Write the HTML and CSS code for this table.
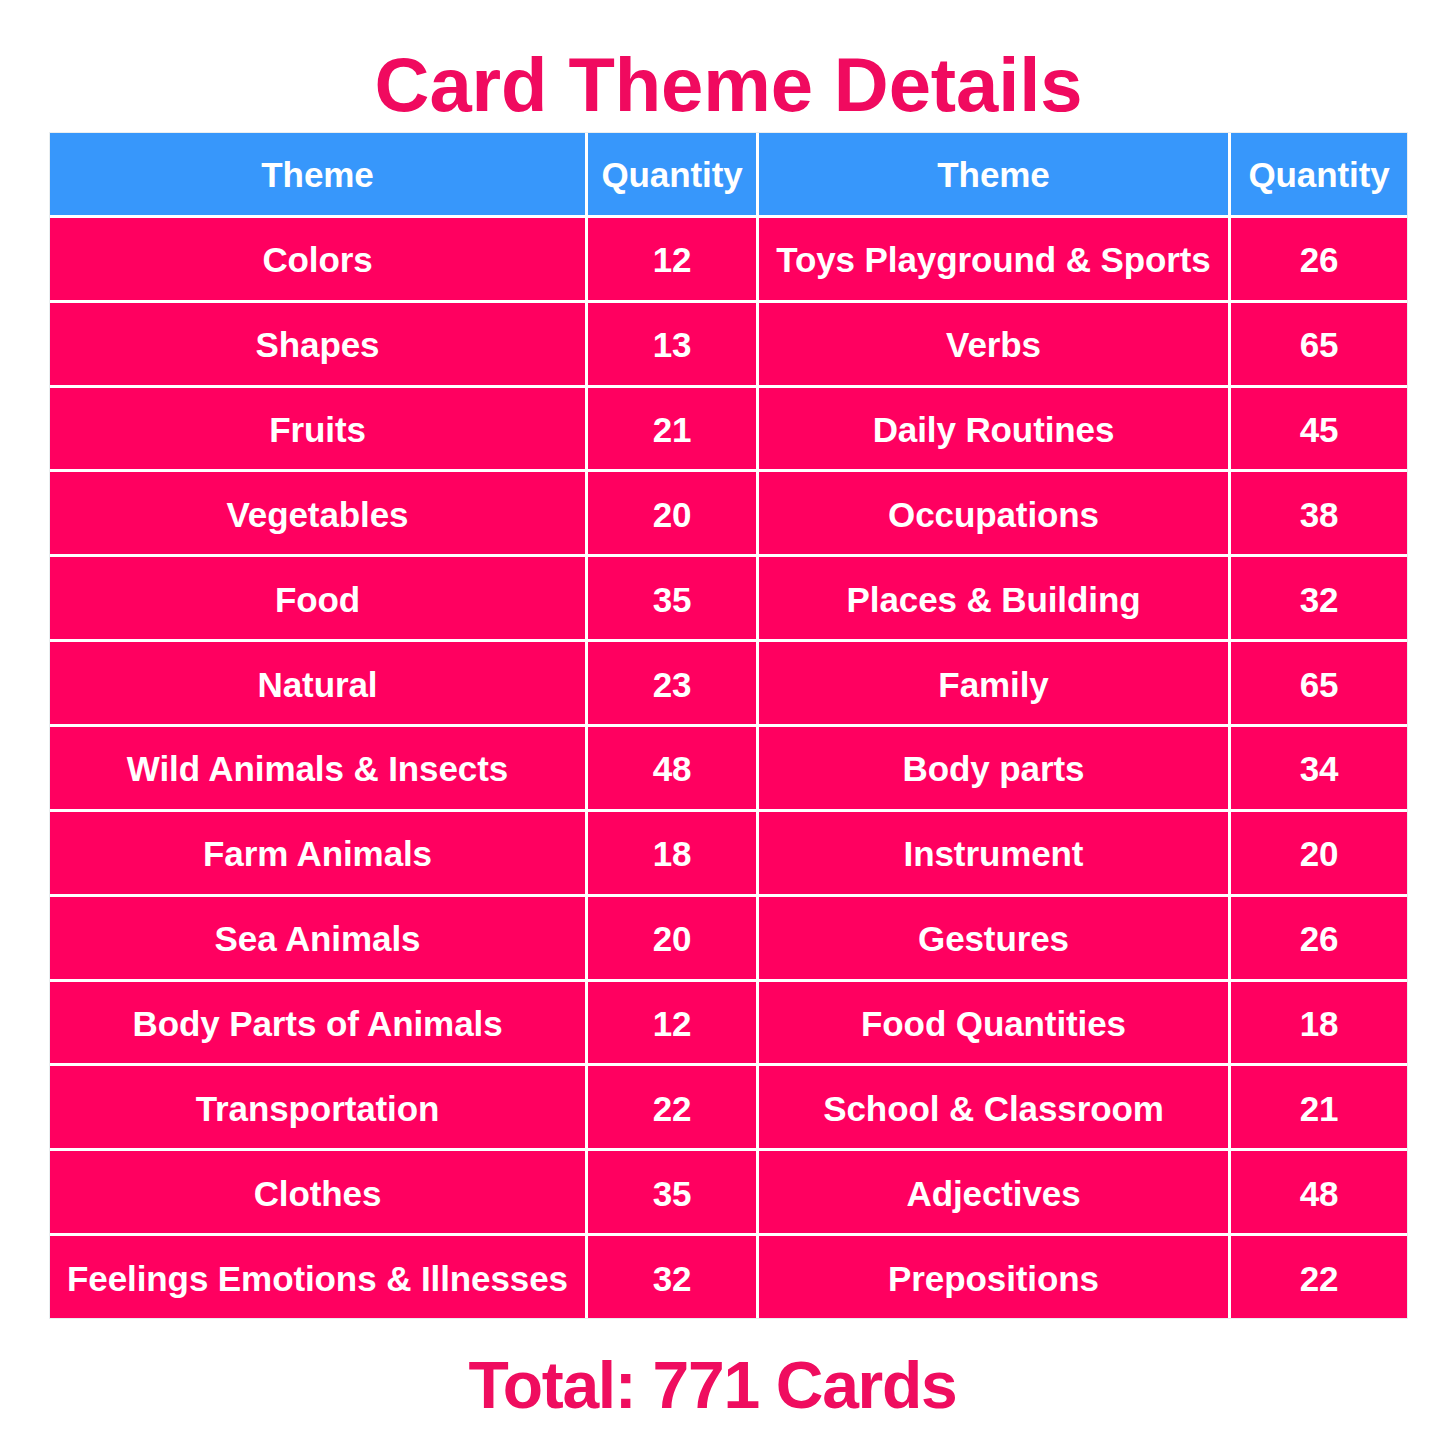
FILE: index.html
```html
<!DOCTYPE html>
<html lang="en">
<head>
<meta charset="utf-8">
<title>Card Theme Details</title>
<link rel="stylesheet" href="styles.css">
</head>
<body>
<div class="page">
  <h1 class="title">Card Theme Details</h1>
  <div class="grid">
    <div class="cell head">Theme</div><div class="cell head">Quantity</div><div class="cell head">Theme</div><div class="cell head">Quantity</div>
    <div class="cell">Colors</div><div class="cell">12</div><div class="cell">Toys Playground &amp; Sports</div><div class="cell">26</div>
    <div class="cell">Shapes</div><div class="cell">13</div><div class="cell">Verbs</div><div class="cell">65</div>
    <div class="cell">Fruits</div><div class="cell">21</div><div class="cell">Daily Routines</div><div class="cell">45</div>
    <div class="cell">Vegetables</div><div class="cell">20</div><div class="cell">Occupations</div><div class="cell">38</div>
    <div class="cell">Food</div><div class="cell">35</div><div class="cell">Places &amp; Building</div><div class="cell">32</div>
    <div class="cell">Natural</div><div class="cell">23</div><div class="cell">Family</div><div class="cell">65</div>
    <div class="cell">Wild Animals &amp; Insects</div><div class="cell">48</div><div class="cell">Body parts</div><div class="cell">34</div>
    <div class="cell">Farm Animals</div><div class="cell">18</div><div class="cell">Instrument</div><div class="cell">20</div>
    <div class="cell">Sea Animals</div><div class="cell">20</div><div class="cell">Gestures</div><div class="cell">26</div>
    <div class="cell">Body Parts of Animals</div><div class="cell">12</div><div class="cell">Food Quantities</div><div class="cell">18</div>
    <div class="cell">Transportation</div><div class="cell">22</div><div class="cell">School &amp; Classroom</div><div class="cell">21</div>
    <div class="cell">Clothes</div><div class="cell">35</div><div class="cell">Adjectives</div><div class="cell">48</div>
    <div class="cell">Feelings Emotions &amp; Illnesses</div><div class="cell">32</div><div class="cell">Prepositions</div><div class="cell">22</div>
  </div>
  <p class="total">Total: 771 Cards</p>
</div>
</body>
</html>
```

FILE: styles.css
```css
html, body {
  margin: 0;
  padding: 0;
  background: #ffffff;
}

body {
  font-family: "Liberation Sans", Arial, sans-serif;
  font-weight: bold;
}

.page {
  width: 1445px;
  height: 1445px;
  padding-top: 47px;
  box-sizing: border-box;
}

.title {
  margin: 0 0 10px 50px;
  width: 1357px;
  font-size: 76px;
  line-height: 76px;
  height: 76px;
  text-align: center;
  color: #f00a5f;
  letter-spacing: -0.1px;
}

.grid {
  margin-left: 50px;
  width: 1357px;
  height: 1185px;
  display: grid;
  grid-template-columns: 535px 168px 469px 176px;
  grid-template-rows: repeat(14, 1fr);
  gap: 3px;
  background: #ffffff;
  box-shadow: 0 0 0 1px #e9eef0;
}

.cell {
  background: #ff0060;
  color: #ffffff;
  font-size: 35px;
  line-height: 35px;
  padding-top: 2px;
  box-sizing: border-box;
  display: flex;
  align-items: center;
  justify-content: center;
  text-align: center;
  white-space: nowrap;
  letter-spacing: -0.1px;
}

.cell.head {
  background: #3797fb;
}

.total {
  margin: 34px 0 0 50px;
  width: 1325px;
  font-size: 66px;
  line-height: 66px;
  height: 66px;
  text-align: center;
  color: #ef0d5f;
  letter-spacing: -1.3px;
}
```
